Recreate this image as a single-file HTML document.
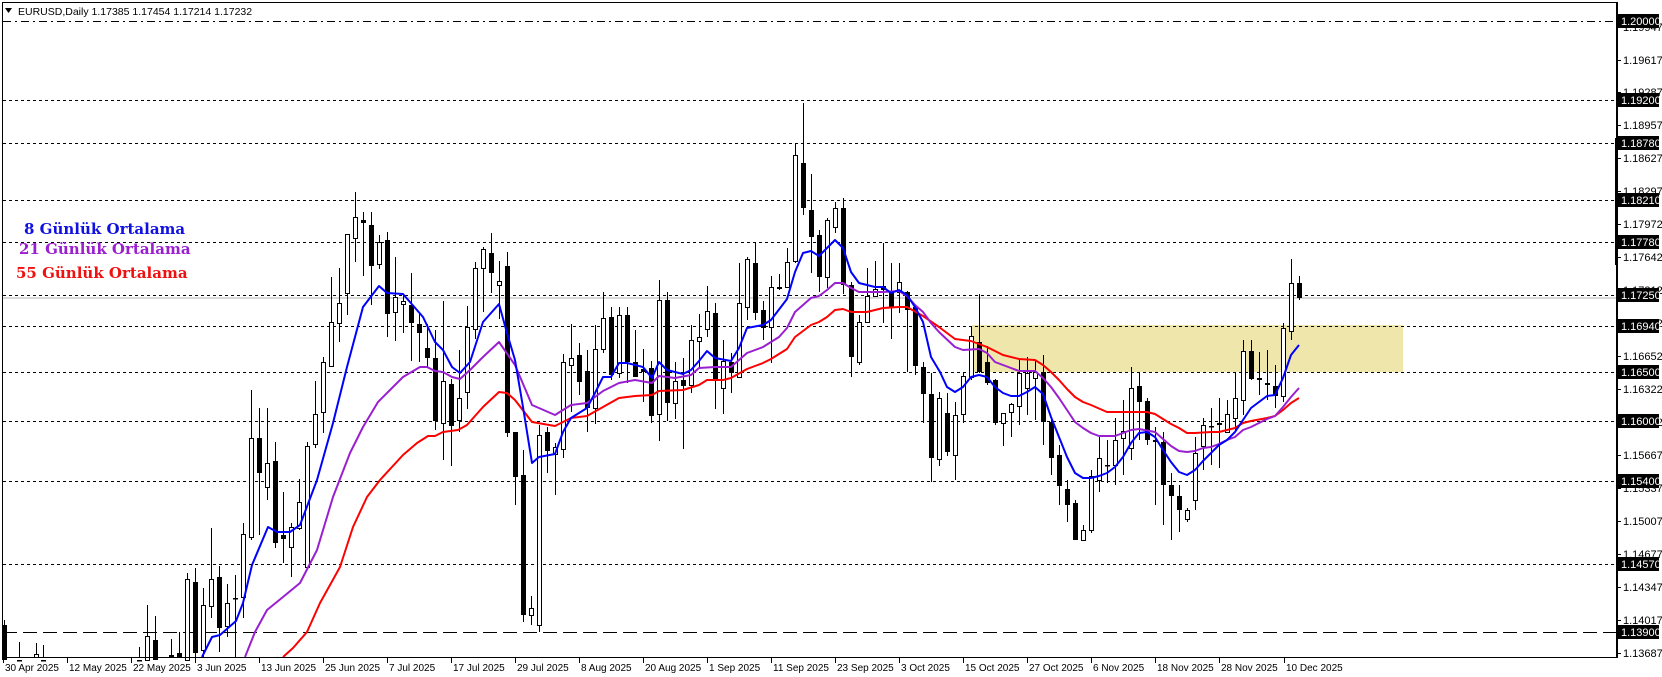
<!DOCTYPE html>
<html><head><meta charset="utf-8"><style>
html,body{margin:0;padding:0;background:#fff;width:1662px;height:677px;overflow:hidden}
svg{display:block}
</style></head><body>
<svg id="s" width="1662" height="677" xmlns="http://www.w3.org/2000/svg" font-family="Liberation Sans, DejaVu Sans, sans-serif">
<rect x="0" y="0" width="1662" height="677" fill="#fff"/>
<rect x="972" y="325" width="431" height="47" fill="#EEE6AA"/>
<g id="grid"></g>
<line x1="2" y1="298" x2="1617" y2="298" stroke="#b0b0b0" stroke-width="1"/>
<g id="candles"></g>
<g id="ma"></g>
<rect x="2.5" y="2.5" width="1614" height="655" fill="none" stroke="#000" stroke-width="1"/>
<path d="M5 8 L12 8 L8.5 13 Z" fill="#000"/>
<text x="18" y="15" font-size="10.5" fill="#000">EURUSD,Daily  1.17385 1.17454 1.17214 1.17232</text>
<g font-family="DejaVu Serif, Liberation Serif, serif" font-weight="bold" font-size="15">
<text x="24" y="234" fill="#1010e0">8 Günlük Ortalama</text>
<text x="19" y="254" fill="#9a1fd0">21 Günlük Ortalama</text>
<text x="16" y="278" fill="#f01010">55 Günlük Ortalama</text>
</g>
<rect x="1615" y="138" width="3" height="127" fill="#000"/>
<g id="axis" font-size="11"></g>
<g id="dates" font-size="10"></g>
</svg>
<script>
var NS="http://www.w3.org/2000/svg";
function el(p,t,a,txt){var e=document.createElementNS(NS,t);for(var k in a)e.setAttribute(k,a[k]);if(txt!=null)e.textContent=txt;p.appendChild(e);return e;}
var g=document.getElementById('grid');
var lines=[[21,'8,4,2,4'],[100,'3,3'],[143,'3,3'],[200,'3,3'],[242,'3,3'],[295,'3,3'],[326,'3,3'],[372,'3,3'],[421,'3,3'],[481,'3,3'],[564,'3,3'],[632,'14,6']];
lines.forEach(function(l){el(g,'line',{x1:3,y1:l[0]+.5,x2:1616,y2:l[0]+.5,stroke:'#000','stroke-dasharray':l[1],'stroke-width':1});});
var C=[
[4,0,625,660,620,660],[19,0,660,660,642,660],[36,1,654,657,643,660],[43,0,660,660,645,660],[139,0,660,660,647,660],
[147,1,636,660,605,660],[155,0,640,660,616,660],[171,0,655,657,639,660],[179,0,653,657,632,660],
[187,1,579,660,573,660],[195,0,582,653,568,660],[203,1,605,650,588,660],[211,1,579,606,528,618],[219,0,577,628,566,652],
[227,1,603,626,584,637],[235,0,598,599,575,660],[243,1,534,597,523,618],[251,1,438,537,390,540],[259,0,438,473,408,535],
[267,1,463,487,408,500],[275,0,461,543,442,548],[283,0,535,539,492,563],[291,1,527,547,523,577],[299,1,502,528,479,530],
[307,1,446,567,442,568],[315,1,414,444,381,448],[323,1,362,412,357,433],[331,1,322,366,277,367],[339,1,303,323,268,342],
[347,1,234,293,234,315],[355,1,217,238,192,262],[363,0,220,223,212,276],[371,0,225,266,212,305],[379,1,242,264,235,269],
[387,0,240,314,232,337],[395,1,297,312,257,341],[403,1,301,304,295,333],[411,0,305,323,273,361],[419,0,324,333,312,362],
[427,0,348,358,324,367],[435,0,358,421,330,430],[443,1,381,423,301,460],[451,0,384,426,379,466],[459,1,398,420,350,432],
[467,1,327,392,306,409],[475,1,268,329,262,339],[483,1,249,268,247,312],[491,0,253,273,233,293],[499,1,281,285,261,319],
[507,0,266,433,252,437],[515,0,432,477,432,505],[523,0,475,615,450,622],[531,1,608,615,596,625],[539,1,435,625,425,632],
[547,0,432,451,427,473],[555,1,447,454,443,495],[563,1,362,449,354,458],[571,1,358,365,324,412],[579,0,355,382,343,395],
[587,0,371,408,350,432],[595,1,349,408,325,424],[603,1,318,349,292,353],[611,0,317,375,307,380],[619,1,315,373,307,378],
[627,0,315,362,307,383],[635,0,362,377,330,377],[643,0,369,372,349,402],[651,0,368,416,361,423],[659,1,300,414,280,441],
[667,0,300,403,292,421],[675,1,381,403,362,419],[683,0,380,386,358,449],[691,1,340,385,325,393],[699,1,337,341,314,367],
[707,1,311,329,286,337],[715,0,313,380,303,409],[723,1,361,388,340,414],[731,0,362,373,353,393],[739,1,303,377,263,377],
[747,1,259,307,257,320],[755,0,263,313,242,320],[763,0,310,328,301,340],[771,1,287,327,276,363],[779,1,287,288,274,290],
[787,1,262,287,248,288],[795,1,155,261,143,263],[803,0,163,208,103,215],[811,0,210,237,174,273],[819,0,235,277,230,292],
[827,1,220,277,218,288],[835,1,208,227,202,233],[843,0,208,285,198,294],[851,0,285,357,282,377],[859,1,322,362,315,365],
[867,1,296,322,268,323],[875,1,289,296,261,297],[883,0,286,290,243,323],[891,0,292,307,263,339],[899,1,282,292,263,313],
[907,0,292,310,291,372],[915,0,307,366,305,375],[923,0,367,394,362,423],[931,0,394,458,373,482],[939,1,398,459,392,466],
[947,0,413,452,393,456],[955,1,415,455,402,480],[963,1,376,414,373,423],[971,1,336,377,327,380],[979,0,342,372,294,373],
[987,0,362,383,346,385],[995,0,380,423,379,425],[1003,1,413,423,413,446],[1011,1,404,412,403,437],
[1019,1,373,406,360,425],[1027,1,373,388,357,415],[1035,1,372,378,360,420],[1043,0,372,422,355,445],[1051,0,422,458,420,475],
[1059,0,455,486,445,505],[1067,0,489,505,480,522],[1075,0,503,540,500,540],[1083,1,530,540,525,540],[1091,1,476,530,470,533],
[1099,1,458,480,435,492],[1107,0,465,466,440,483],[1115,1,440,465,418,485],[1123,1,431,438,400,475],[1131,1,388,448,367,460],
[1139,0,386,402,372,440],[1147,0,401,440,398,445],[1155,0,440,442,427,505],[1163,0,442,485,432,525],[1171,0,485,496,473,540],
[1179,0,496,510,485,532],[1187,1,510,519,508,522],[1195,1,453,500,437,510],[1203,1,425,446,418,470],[1211,0,426,427,408,465],
[1219,1,423,424,398,468],[1227,1,414,432,400,430],[1235,1,398,418,372,432],[1243,1,351,400,340,415],[1251,0,351,379,340,380],
[1259,0,378,380,352,395],[1267,0,383,385,350,400],[1275,0,386,396,365,408],[1283,1,328,396,323,402],[1291,1,283,331,259,340],
[1299,0,283,298,276,300]];
var cg=document.getElementById('candles');
C.forEach(function(c){var x=c[0];var bt=c[2],bb=Math.max(c[3],c[2]+1);
el(cg,'line',{x1:x+.5,y1:c[4],x2:x+.5,y2:Math.min(c[5],657),stroke:'#000','stroke-width':1});
if(c[1]) el(cg,'rect',{x:x-1.5,y:bt+.5,width:4,height:Math.max(bb-bt,1),fill:'#fff',stroke:'#000','stroke-width':1});
else el(cg,'rect',{x:x-2,y:bt,width:5,height:Math.max(bb-bt,1.5),fill:'#000'});});
var blue=[[202,657],[212,637],[220,635],[236,621],[243,603],[252,565],[268,527],[277,532],[290,532],[300,525],[317,480],[333,423],[347,367],[363,307],[379,286],[387,293],[403,294],[423,317],[435,342],[443,350],[452,367],[460,373],[470,362],[483,322],[499,304],[507,333],[515,360],[523,407],[532,463],[539,457],[555,454],[563,432],[571,418],[587,408],[595,393],[603,377],[611,377],[619,363],[627,363],[643,367],[652,378],[659,362],[667,370],[683,374],[691,370],[699,361],[707,351],[715,358],[731,361],[739,348],[747,328],[763,325],[771,320],[787,299],[795,272],[803,253],[811,251],[819,256],[827,248],[835,240],[843,248],[851,272],[859,283],[875,287],[883,287],[891,293],[899,290],[907,295],[915,307],[923,322],[931,357],[940,372],[947,387],[955,392],[963,387],[971,377],[979,375],[987,377],[995,387],[1003,393],[1011,396],[1019,396],[1027,392],[1035,387],[1043,394],[1051,417],[1059,437],[1067,457],[1075,473],[1083,478],[1091,478],[1099,476],[1107,473],[1115,467],[1123,457],[1131,443],[1139,433],[1147,432],[1155,437],[1163,450],[1171,462],[1179,472],[1187,475],[1195,470],[1203,461],[1211,453],[1219,445],[1227,440],[1235,432],[1243,420],[1251,408],[1259,402],[1267,396],[1275,395],[1283,378],[1291,355],[1299,345]];
var purple=[[245,657],[255,632],[267,610],[283,597],[300,583],[317,550],[333,497],[350,453],[363,427],[378,402],[393,387],[403,377],[420,367],[427,367],[435,371],[443,372],[452,377],[460,379],[470,370],[483,357],[499,342],[515,365],[532,405],[555,415],[571,405],[587,403],[603,391],[619,383],[635,380],[652,383],[659,376],[675,378],[691,375],[699,368],[715,367],[731,367],[747,353],[763,347],[779,337],[787,328],[795,312],[811,298],[819,296],[827,290],[835,283],[843,283],[851,288],[859,292],[883,292],[899,291],[907,296],[915,305],[923,312],[931,323],[939,332],[955,347],[963,350],[979,349],[987,353],[995,362],[1003,365],[1011,368],[1019,371],[1035,371],[1043,378],[1051,387],[1059,398],[1067,410],[1075,422],[1083,428],[1091,433],[1099,436],[1115,436],[1123,433],[1131,430],[1139,429],[1155,432],[1163,439],[1171,446],[1179,451],[1187,452],[1195,451],[1203,448],[1211,447],[1219,444],[1227,440],[1235,437],[1243,430],[1251,427],[1259,423],[1267,419],[1275,416],[1283,407],[1291,397],[1299,388]];
var red=[[283,657],[293,648],[307,632],[320,603],[340,567],[353,527],[367,497],[380,480],[403,455],[417,443],[428,436],[435,436],[443,432],[458,430],[467,425],[483,407],[499,392],[507,393],[515,400],[532,422],[555,426],[571,418],[587,416],[603,407],[619,398],[635,396],[652,395],[659,391],[683,390],[699,385],[707,380],[723,380],[731,378],[747,369],[755,366],[763,363],[771,359],[787,349],[795,337],[811,325],[819,322],[827,317],[835,310],[843,309],[851,312],[867,312],[883,308],[899,307],[907,307],[923,316],[939,327],[955,339],[971,341],[987,347],[1003,355],[1019,359],[1035,360],[1043,365],[1051,372],[1059,380],[1067,389],[1075,397],[1083,402],[1091,405],[1107,412],[1123,412],[1139,412],[1147,412],[1155,414],[1163,419],[1171,424],[1179,428],[1187,433],[1195,433],[1211,432],[1219,432],[1235,428],[1243,423],[1251,421],[1267,418],[1275,416],[1283,410],[1291,403],[1299,398]];
var mg=document.getElementById('ma');
[[red,'#ff0000'],[purple,'#9a1fd0'],[blue,'#0000ff']].forEach(function(m){el(mg,'polyline',{points:m[0].map(function(p){return p.join(',')}).join(' '),fill:'none',stroke:m[1],'stroke-width':2,'stroke-linejoin':'round'});});
var ax=document.getElementById('axis');
el(ax,'line',{x1:1617.5,y1:2,x2:1617.5,y2:658,stroke:'#000'});
var ticks=[['1.19947',27],['1.19617',60],['1.19287',92],['1.18957',125],['1.18627',158],['1.18297',191],['1.17972',224],['1.17642',257],['1.17312',290],['1.16982',323],['1.16652',356],['1.16322',389],['1.15992',422],['1.15667',455],['1.15337',488],['1.15007',521],['1.14677',554],['1.14347',587],['1.14017',620],['1.13687',653]];
ticks.forEach(function(t){el(ax,'line',{x1:1617,y1:t[1]+.5,x2:1621,y2:t[1]+.5,stroke:'#000'});el(ax,'text',{x:1623,y:t[1]+4,fill:'#000'},t[0]);});
var boxes=[['1.20000',21],['1.19200',100],['1.18780',143],['1.18210',200],['1.17780',242],['1.17250',295],['1.16940',326],['1.16500',372],['1.16000',421],['1.15400',481],['1.14570',564],['1.13900',632]];
boxes.forEach(function(b){el(ax,'rect',{x:1618,y:b[1]-7,width:41,height:14,fill:'#000'});el(ax,'text',{x:1621,y:b[1]+4,fill:'#fff'},b[0]);});
var dg=document.getElementById('dates');
var D=[['30 Apr 2025',3],['12 May 2025',67],['22 May 2025',131],['3 Jun 2025',195],['13 Jun 2025',259],['25 Jun 2025',323],['7 Jul 2025',387],['17 Jul 2025',451],['29 Jul 2025',515],['8 Aug 2025',579],['20 Aug 2025',643],['1 Sep 2025',707],['11 Sep 2025',771],['23 Sep 2025',835],['3 Oct 2025',899],['15 Oct 2025',963],['27 Oct 2025',1027],['6 Nov 2025',1091],['18 Nov 2025',1155],['28 Nov 2025',1219],['10 Dec 2025',1284]];
D.forEach(function(d){el(dg,'line',{x1:d[1]+.5,y1:658,x2:d[1]+.5,y2:663,stroke:'#000'});el(dg,'text',{x:d[1]+2,y:671,fill:'#000'},d[0]);});
</script>
</body></html>
